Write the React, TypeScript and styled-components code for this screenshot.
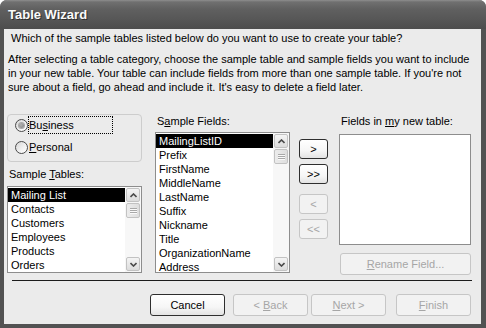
import React from 'react';
import styled, { createGlobalStyle } from 'styled-components';

const Global = createGlobalStyle`
  html, body { margin: 0; padding: 0; background: #fff; }
  body {
    font-family: "Liberation Sans", Arial, sans-serif;
    font-size: 11px;
    color: #000;
  }
`;

const Window = styled.div`
  width: 486px;
  height: 328px;
  background: #525252;
  border-radius: 7px 7px 0 0;
  display: flex;
  flex-direction: column;
  overflow: hidden;
`;

const TitleBar = styled.div`
  height: 29px;
  flex: none;
  box-sizing: border-box;
  background: linear-gradient(to bottom, #8e8e8e 0px, #707070 2px, #606060 9px, #565656 20px, #4d4d4d 29px);
  display: flex;
  align-items: center;
  padding: 0 0 1px 8px;
  color: #fafafa;
  font-weight: bold;
  font-size: 13px;
  text-shadow: 1px 1px 0 #2e2e2e;
`;

const Client = styled.div`
  flex: 1;
  margin: 0 5px 4px 4px;
  background: #ebebeb;
  display: flex;
  flex-direction: column;
`;

const Question = styled.div`
  margin: 2px 0 0 7px;
  line-height: 14px;
`;

const Intro = styled.p`
  margin: 7px 0 0 4px;
  line-height: 14px;
`;

const Main = styled.div`
  display: flex;
  align-items: flex-start;
  margin-top: 18px;
  padding-left: 3px;
  height: 163px;
`;

const Column = styled.div<{ $w: number; $ml?: number; $mt?: number }>`
  width: ${(p) => p.$w}px;
  margin-left: ${(p) => p.$ml ?? 0}px;
  margin-top: ${(p) => p.$mt ?? 0}px;
  display: flex;
  flex-direction: column;
  flex: none;
`;

const GroupBox = styled.div`
  margin-top: 2px;
  height: 48px;
  box-sizing: border-box;
  border: 1px solid #cdcdcd;
  border-radius: 4px;
  padding: 1px 0 0 7px;
  display: flex;
  flex-direction: column;
  gap: 4px;
`;

const RadioRow = styled.div`
  display: flex;
  align-items: center;
  height: 18px;
`;

const RadioCircle = styled.span<{ $checked?: boolean }>`
  width: 13px;
  height: 13px;
  box-sizing: border-box;
  border-radius: 50%;
  border: 1px solid #4a4a4a;
  background: linear-gradient(135deg, #d6d6d6 0%, #f2f2f2 60%, #ffffff 100%);
  display: flex;
  align-items: center;
  justify-content: center;
  &::after {
    content: '';
    display: ${(p) => (p.$checked ? 'block' : 'none')};
    width: 5px;
    height: 5px;
    border-radius: 50%;
    background: radial-gradient(circle at 40% 40%, #b4b4b4, #7a7a7a);
    box-shadow: 0 0 0 1px #a8a8a8;
  }
`;

const RadioLabel = styled.span<{ $focused?: boolean }>`
  width: 85px;
  height: 18px;
  box-sizing: border-box;
  border: 1px dotted ${(p) => (p.$focused ? '#000' : 'transparent')};
  padding-left: 0px;
  line-height: 16px;
`;

const FieldLabel = styled.div<{ $mt: number }>`
  margin-top: ${(p) => p.$mt}px;
  padding-left: 2px;
  line-height: 14px;
  white-space: nowrap;
`;

const ListBox = styled.div<{ $h: number; $mt: number }>`
  margin-top: ${(p) => p.$mt}px;
  height: ${(p) => p.$h}px;
  box-sizing: border-box;
  border: 1px solid #8d8d8d;
  background: #fff;
  display: flex;
  overflow: hidden;
`;

const Items = styled.ul`
  list-style: none;
  margin: 0;
  padding: 1px 0 0 0;
  flex: 1;
  overflow: hidden;
`;

const Item = styled.li<{ $selected?: boolean }>`
  height: 14px;
  line-height: 14px;
  padding-left: 3px;
  white-space: nowrap;
  background: ${(p) => (p.$selected ? '#000' : 'transparent')};
  color: ${(p) => (p.$selected ? '#fff' : '#000')};
`;

const ScrollTrack = styled.div`
  width: 16px;
  flex: none;
  background: #f7f7f7;
  display: flex;
  flex-direction: column;
  padding: 1px 0;
  box-sizing: border-box;
`;

const ScrollButton = styled.div`
  height: 14px;
  margin: 0 1px;
  box-sizing: border-box;
  border: 1px solid #c2c2c2;
  border-radius: 2px;
  background: linear-gradient(to bottom, #f4f4f4, #dcdcdc);
  display: flex;
  align-items: center;
  justify-content: center;
  flex: none;
`;

const Thumb = styled.div`
  height: 15px;
  margin: 1px 1px 0;
  box-sizing: border-box;
  border: 1px solid #c2c2c2;
  border-radius: 2px;
  background: linear-gradient(to right, #ececec, #dedede);
  display: flex;
  flex-direction: column;
  align-items: center;
  justify-content: center;
  gap: 1px;
  flex: none;
`;

const Grip = styled.span`
  width: 7px;
  height: 1px;
  background: #a8a8a8;
  box-shadow: 0 1px 0 #fafafa;
`;

const Spacer = styled.div`
  flex: 1;
`;

const ArrowColumn = styled.div`
  width: 29px;
  margin-left: 9px;
  margin-top: 27px;
  display: flex;
  flex-direction: column;
  flex: none;
`;

const Button = styled.button<{ $w?: number; $h?: number; $ml?: number; $mt?: number; $off?: boolean }>`
  width: ${(p) => p.$w ?? 75}px;
  height: ${(p) => p.$h ?? 22}px;
  margin: ${(p) => p.$mt ?? 0}px 0 0 ${(p) => p.$ml ?? 0}px;
  padding: 0;
  box-sizing: border-box;
  font-family: "Liberation Sans", Arial, sans-serif;
  font-size: 11px;
  border-radius: 3px;
  border: 1px solid ${(p) => (p.$off ? '#c6c6c6' : '#2e2e2e')};
  color: ${(p) => (p.$off ? '#a6a6a6' : '#000')};
  background: ${(p) =>
    p.$off
      ? '#f2f2f2'
      : 'linear-gradient(to bottom, #ffffff 0%, #f6f6f6 60%, #e3e3e3 100%)'};
  flex: none;
  cursor: default;
`;

const Separator = styled.div`
  margin: 5px 9px 0 8px;
  border-top: 1px solid #1c1c1c;
`;

const Footer = styled.div`
  display: flex;
  justify-content: flex-end;
  margin-top: 13px;
  padding-right: 10px;
`;

const Chevron = ({ down }: { down?: boolean }) => (
  <svg width="7" height="5" viewBox="0 0 7 5">
    <path
      d={down ? 'M0.5 1 L3.5 4 L6.5 1' : 'M0.5 4 L3.5 1 L6.5 4'}
      fill="none"
      stroke="#4a4a4a"
      strokeWidth="1.6"
    />
  </svg>
);

const Scrollbar = () => (
  <ScrollTrack>
    <ScrollButton>
      <Chevron />
    </ScrollButton>
    <Thumb>
      <Grip />
      <Grip />
      <Grip />
    </Thumb>
    <Spacer />
    <ScrollButton>
      <Chevron down />
    </ScrollButton>
  </ScrollTrack>
);

const tables = ['Mailing List', 'Contacts', 'Customers', 'Employees', 'Products', 'Orders'];
const fields = [
  'MailingListID',
  'Prefix',
  'FirstName',
  'MiddleName',
  'LastName',
  'Suffix',
  'Nickname',
  'Title',
  'OrganizationName',
  'Address',
];

export default function App() {
  return (
    <>
      <Global />
      <Window>
        <TitleBar>Table Wizard</TitleBar>
        <Client>
          <Question>Which of the sample tables listed below do you want to use to create your table?</Question>
          <Intro>
            After selecting a table category, choose the sample table and sample fields you want to include
            <br />
            in your new table. Your table can include fields from more than one sample table. If you're not
            <br />
            sure about a field, go ahead and include it. It's easy to delete a field later.
          </Intro>
          <Main>
            <Column $w={135}>
              <GroupBox>
                <RadioRow>
                  <RadioCircle $checked />
                  <RadioLabel $focused>
                    Bu<u>s</u>iness
                  </RadioLabel>
                </RadioRow>
                <RadioRow>
                  <RadioCircle />
                  <RadioLabel>
                    <u>P</u>ersonal
                  </RadioLabel>
                </RadioRow>
              </GroupBox>
              <FieldLabel $mt={5}>
                Sample <u>T</u>ables:
              </FieldLabel>
              <ListBox $h={87} $mt={5}>
                <Items>
                  {tables.map((t, i) => (
                    <Item key={t} $selected={i === 0}>
                      {t}
                    </Item>
                  ))}
                </Items>
                <Scrollbar />
              </ListBox>
            </Column>
            <Column $w={135} $ml={13}>
              <FieldLabel $mt={2}>
                S<u>a</u>mple Fields:
              </FieldLabel>
              <ListBox $h={141} $mt={4}>
                <Items>
                  {fields.map((f, i) => (
                    <Item key={f} $selected={i === 0}>
                      {f}
                    </Item>
                  ))}
                </Items>
                <Scrollbar />
              </ListBox>
            </Column>
            <ArrowColumn>
              <Button $w={29} $h={20}>&gt;</Button>
              <Button $w={29} $h={20} $mt={5}>&gt;&gt;</Button>
              <Button $w={29} $h={20} $mt={10} $off>&lt;</Button>
              <Button $w={29} $h={20} $mt={5} $off>&lt;&lt;</Button>
            </ArrowColumn>
            <Column $w={132} $ml={11}>
              <FieldLabel $mt={2}>
                Fields in <u>m</u>y new table:
              </FieldLabel>
              <ListBox $h={111} $mt={6} />
              <Button $w={131} $h={22} $ml={1} $mt={8} $off>
                <u>R</u>ename Field...
              </Button>
            </Column>
          </Main>
          <Separator />
          <Footer>
            <Button>Cancel</Button>
            <Button $ml={8} $off>
              &lt; <u>B</u>ack
            </Button>
            <Button $ml={3} $off>
              <u>N</u>ext &gt;
            </Button>
            <Button $ml={10} $off>
              <u>F</u>inish
            </Button>
          </Footer>
        </Client>
      </Window>
    </>
  );
}
